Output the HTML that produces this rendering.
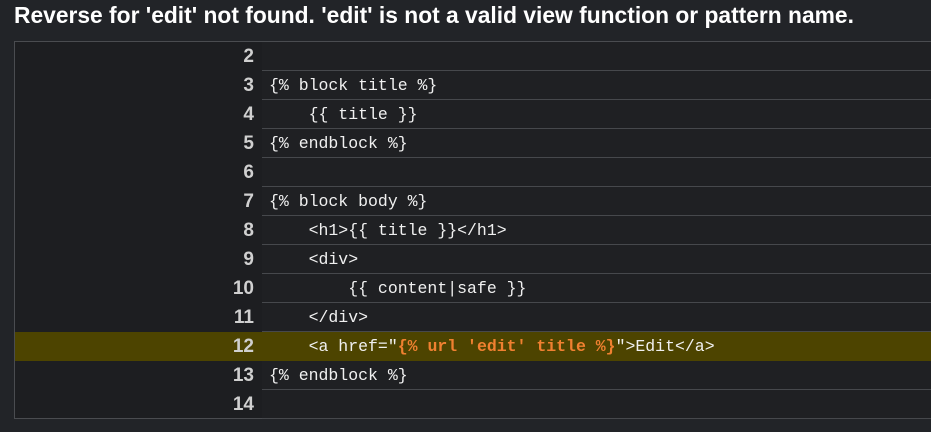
<!DOCTYPE html>
<html><head><style>
html,body{margin:0;padding:0;background:#222428;width:931px;height:432px;overflow:hidden}
h1{margin:0;position:absolute;left:14px;top:2px;font:bold 22.8px "Liberation Sans",sans-serif;color:#fff;white-space:nowrap}
.box{position:absolute;left:14px;top:41px;width:917px;height:378px;border:1px solid #4a4c50;border-right:none;background:#1d1e21;box-sizing:border-box}
.row{position:absolute;left:0;width:917px;height:29px}
.n{position:absolute;left:0;width:239px;text-align:right;font:bold 19px "Liberation Sans",sans-serif;color:#d0d0d0;line-height:29px}
.c{position:absolute;left:247px;right:0;top:0;height:28px;border-bottom:1px solid #46484c;font:16.5px "Liberation Mono",monospace;color:#f0f0f0;line-height:29px;padding-left:7px;white-space:pre;background:#1f2023}
.hl{background:#4d4400}
.hl .c{background:#4d4400;border-bottom:none}
.o{color:#f08030;font-weight:bold}
</style></head><body>
<h1>Reverse for 'edit' not found. 'edit' is not a valid view function or pattern name.</h1>
<div class="box">
<div class="row" style="top:0"><div class="n">2</div><div class="c"></div></div>
<div class="row" style="top:29px"><div class="n">3</div><div class="c">{% block title %}</div></div>
<div class="row" style="top:58px"><div class="n">4</div><div class="c">    {{ title }}</div></div>
<div class="row" style="top:87px"><div class="n">5</div><div class="c">{% endblock %}</div></div>
<div class="row" style="top:116px"><div class="n">6</div><div class="c"></div></div>
<div class="row" style="top:145px"><div class="n">7</div><div class="c">{% block body %}</div></div>
<div class="row" style="top:174px"><div class="n">8</div><div class="c">    &lt;h1&gt;{{ title }}&lt;/h1&gt;</div></div>
<div class="row" style="top:203px"><div class="n">9</div><div class="c">    &lt;div&gt;</div></div>
<div class="row" style="top:232px"><div class="n">10</div><div class="c">        {{ content|safe }}</div></div>
<div class="row" style="top:261px"><div class="n">11</div><div class="c">    &lt;/div&gt;</div></div>
<div class="row hl" style="top:290px"><div class="n">12</div><div class="c">    &lt;a href="<span class="o">{% url 'edit' title %}</span>"&gt;Edit&lt;/a&gt;</div></div>
<div class="row" style="top:319px"><div class="n">13</div><div class="c">{% endblock %}</div></div>
<div class="row" style="top:348px"><div class="n">14</div><div class="c"></div></div>
</div>
</body></html>
